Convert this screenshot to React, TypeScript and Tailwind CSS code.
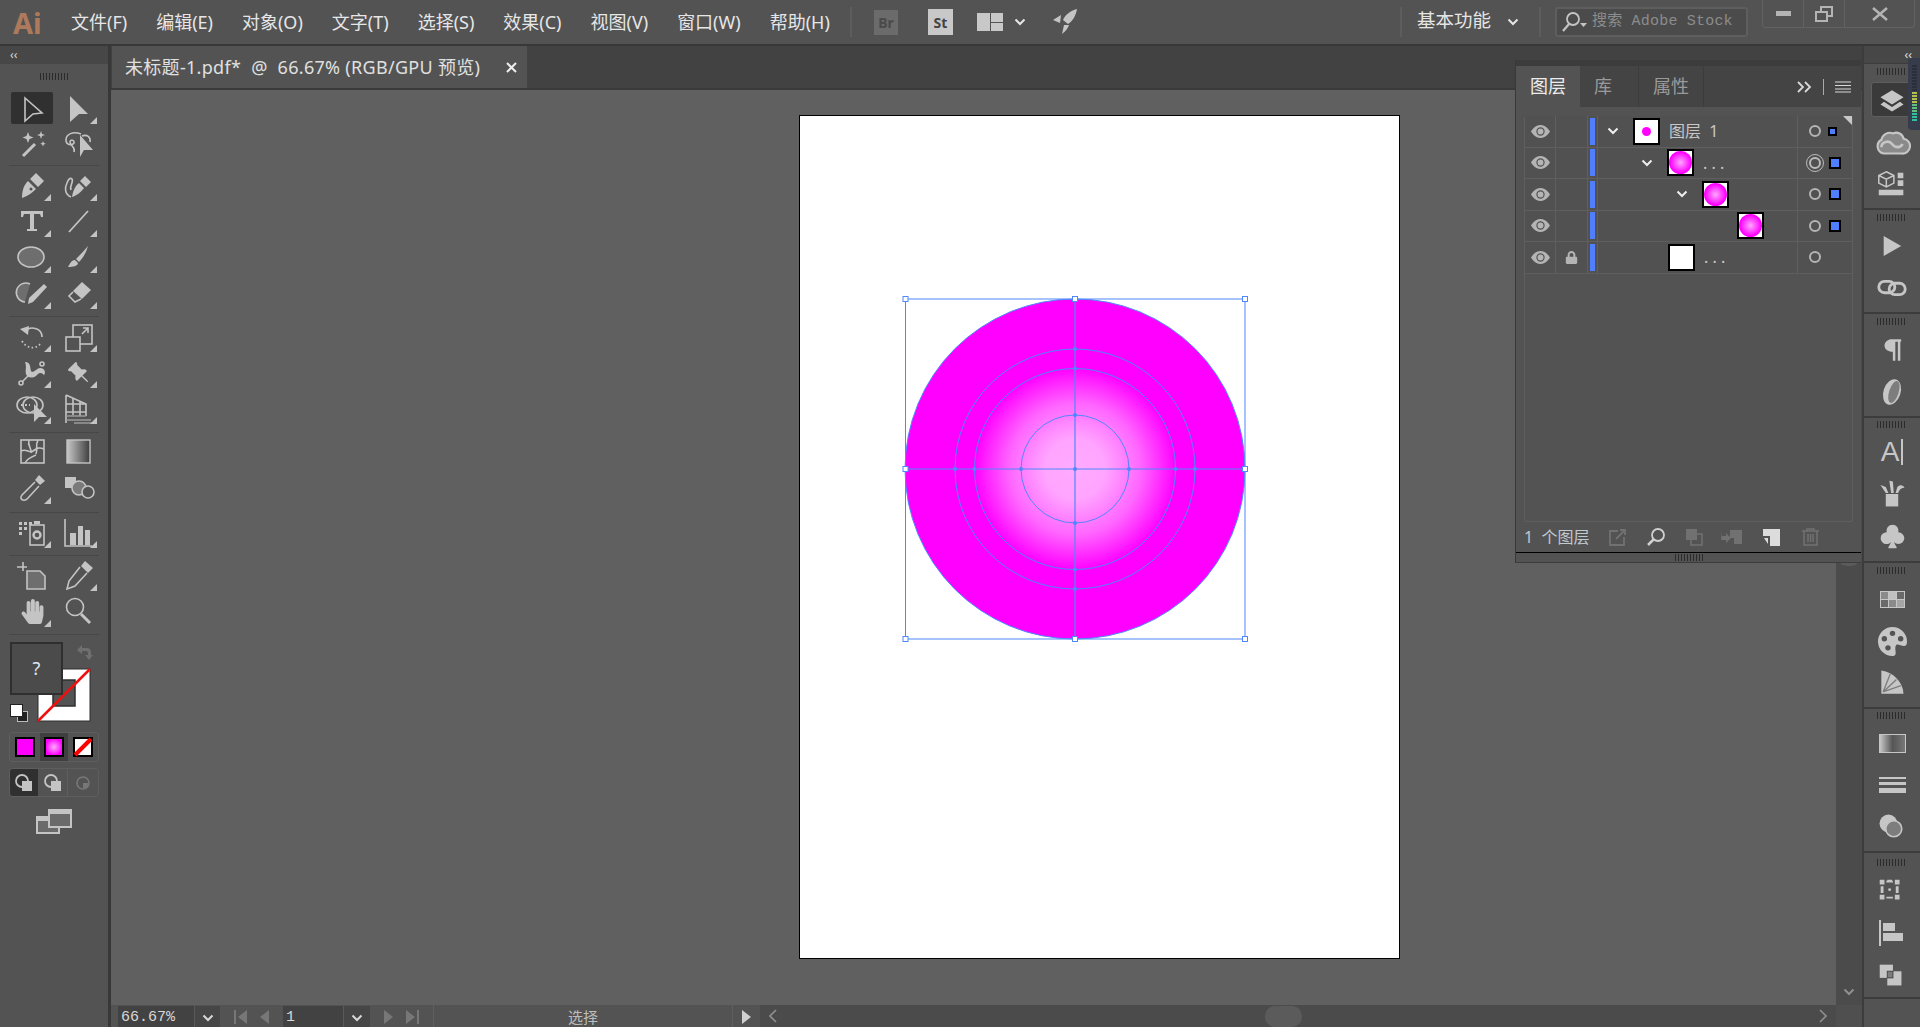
import type { ReactNode } from 'react'
import { BsEyeFill, BsPinAngleFill, BsSuitClubFill, BsPaletteFill } from 'react-icons/bs'
import { FaHandPaper, FaLock } from 'react-icons/fa'

const uiFont = "font-['Noto_Sans','Noto_Sans_CJK_SC',sans-serif]"
const menus = ['文件(F)', '编辑(E)', '对象(O)', '文字(T)', '选择(S)', '效果(C)', '视图(V)', '窗口(W)', '帮助(H)']

function Svg({ children, size = 36, box = 36 }: { children: ReactNode; size?: number; box?: number }) {
  return (
    <svg width={size} height={size} viewBox={`0 0 ${box} ${box}`} fill="currentColor" className="block">
      {children}
    </svg>
  )
}

function Chevron({ className = '' }: { className?: string }) {
  return (
    <svg width="12" height="8" viewBox="0 0 12 8" className={className}>
      <path d="M1.5 1.5 6 6l4.500-4.500" fill="none" stroke="currentColor" strokeWidth="2" />
    </svg>
  )
}

function Gripper({ className = '' }: { className?: string }) {
  return <div className={`h-[7px] w-[28px] bg-[repeating-linear-gradient(90deg,#2b2b2b_0_1px,transparent_1px_3px)] ${className}`} />
}

// one cell of the tool panel, tri = the little flyout corner
function Tool({ children, tri = true, active = false }: { children: ReactNode; tri?: boolean; active?: boolean }) {
  return (
    <div className="relative flex h-[36px] w-[46px] items-center justify-center text-[#c4c4c4]">
      {active && <div className="absolute left-[2px] top-[2px] h-[32px] w-[42px] rounded-[2px] bg-[#303030]" />}
      <div className="relative flex h-[36px] w-[36px] items-center justify-center">{children}</div>
      {tri && (
        <svg width="7" height="7" viewBox="0 0 7 7" className="absolute bottom-[2px] right-[4px]">
          <path d="M7 0v7H0z" fill="#c4c4c4" />
        </svg>
      )}
    </div>
  )
}

const line = { fill: 'none', stroke: 'currentColor', strokeWidth: 1.6 }

function ToolGroup({ h, children }: { h: string; children: ReactNode }) {
  return <div className={`mx-[9px] border-b border-[#474747] ${h}`}><div className="grid grid-cols-[46px_46px] pt-[1px]">{children}</div></div>
}

function ToolsPanel() {
  return (
    <div className="flex w-[111px] shrink-0 flex-col border-r-[3px] border-[#383838] bg-[#535353]">
      <div className="flex h-[18px] items-center bg-[#474747] pl-[10px] text-[12px] leading-none text-[#d8d8d8]">‹‹</div>
      <div className="flex h-[25px] items-center justify-center"><Gripper /></div>
      <ToolGroup h="h-[77px]">
        <Tool tri={false} active><Svg><path d="M11 8 28 23l-9 1-8 7z" {...line} /></Svg></Tool>
        <Tool><Svg><path d="M10 6 28 24h-9l-9 8z" /></Svg></Tool>
        <Tool tri={false}><Svg><path d="M9 30 21 18" stroke="currentColor" strokeWidth="3" /><path d="m14 6 1.500 4 4 1.500-4 1.500-1.500 4-1.500-4-4-1.500 4-1.500zM27 5l1 3 3 1-3 1-1 3-1-3-3-1 3-1zM29 15l.8 2 2 .8-2 .8-.8 2-.8-2-2-.8 2-.8z" /></Svg></Tool>
        <Tool tri={false}><Svg><path d="M21 8c-8-3-15 0-15 6 0 5 6 6 8 3 1-3-4-4-4-1 0 4 6 5 4 10" {...line} /><path d="M22 10c5-2 9 1 8 6" {...line} /><path d="M20 9v22l4-7h9z" /></Svg></Tool>
      </ToolGroup>
      <ToolGroup h="h-[151px]">
        <Tool><Svg><path d="M8 31c0-8 2-13 6-17l8 8c-4 4-8 7-14 9zM16 12l6-6 8 8-6 6z" /><circle cx="17" cy="22" r="1.500" fill="#535353" /></Svg></Tool>
        <Tool><Svg><path d="M12 30c1-6 3-11 7-14l5 5c-3 4-6 7-12 9zM20 14l5-5 6 6-5 5z" /><path d="M11 30C4 27 5 20 7 16c1-3 3-6 5-4 2 3-3 7-1 11" {...line} /></Svg></Tool>
        <Tool><Svg><path d="M7 8h22v6h-2l-1-3h-6v15h3v2H13v-2h3V11h-6l-1 3H7z" /></Svg></Tool>
        <Tool><Svg><path d="M9 29 28 8" stroke="currentColor" strokeWidth="1.800" /></Svg></Tool>
        <Tool><Svg><ellipse cx="17" cy="18" rx="13" ry="10" fill="#6e6e6e" stroke="currentColor" strokeWidth="1.600" /></Svg></Tool>
        <Tool><Svg><path d="M28 7c-4 5-8 9-12 13l3 3c4-4 7-9 9-16zM15 21c-4 0-5 4-7 7 5 0 10-1 10-4z" /></Svg></Tool>
        <Tool><Svg><path d="M16 9a9.500 9.500 0 1 0-5 18" fill="#6e6e6e" stroke="currentColor" strokeWidth="1.600" /><path d="m30 9 3 3-14 15-5 2 1-6z" /></Svg></Tool>
        <Tool><Svg><path d="m22 7 9 8-9 9-9-8z" /><path d="m13 17-4 4 6 6 6-3" {...line} /></Svg></Tool>
      </ToolGroup>
      <ToolGroup h="h-[116px]">
        <Tool><Svg><path d="M11 14c5-7 17-4 17 5" {...line} /><path d="m6 11 9-3-1 9z" /><path d="M8 23c5 8 14 9 19 2" fill="none" stroke="currentColor" strokeWidth="1.800" strokeDasharray="1.500 2.500" /></Svg></Tool>
        <Tool><Svg><rect x="13" y="7" width="19" height="19" {...line} /><rect x="6" y="19" width="14" height="14" fill="#535353" stroke="currentColor" strokeWidth="1.600" /><path d="m22 16 6-6M23 10h5v5" {...line} /></Svg></Tool>
        <Tool><Svg><path d="M11 8c6 0 5 6 6 9 2 3 6-3 9-3 5 0 6 5 4 7-2-2-4-3-7 0-4 4-10 3-11-1-1-4 1-7-1-12z" /><circle cx="7" cy="29" r="2" {...line} /><circle cx="28" cy="10" r="2" {...line} /><path d="m8 28 8-8" {...line} /></Svg></Tool>
        <Tool><BsPinAngleFill size={23} className="-scale-x-100" /></Tool>
        <Tool><Svg><ellipse cx="13" cy="15" rx="10" ry="8" {...line} /><ellipse cx="19" cy="15" rx="10" ry="8" {...line} /><path d="M7 15h9" fill="none" stroke="currentColor" strokeWidth="2" strokeDasharray="2 2" /><path d="M20 14v18l5-5h8z" /></Svg></Tool>
        <Tool><Svg><path d="M6 5v28M6 5l20 9v12M6 14h20M6 22h20M13 8v17M20 11v15" {...line} /><path d="M6 26h20M6 30h25M14 33h20" stroke="#9a9a9a" strokeWidth="1.400" /></Svg></Tool>
      </ToolGroup>
      <ToolGroup h="h-[80px]">
        <Tool tri={false}><Svg><rect x="7" y="6" width="23" height="23" {...line} /><path d="M7 17c6-3 8 3 12 0s6-4 11-2M15 6c-2 6 3 8 2 13M24 6c-3 5 0 9-2 14M11 29c2-4 6-6 11-8" {...line} /></Svg></Tool>
        <Tool tri={false}><Svg><defs><linearGradient id="gt" x1="0" x2="1"><stop offset="0" stopColor="#c8c8c8" /><stop offset="1" stopColor="#3c3c3c" /></linearGradient></defs><rect x="7" y="6" width="23" height="23" fill="url(#gt)" stroke="#c4c4c4" strokeWidth="1.400" /></Svg></Tool>
        <Tool><Svg><path d="M25 5l6 6-5 4-5-5z" /><path d="M21 12 8 25c-2 2-1 5 1 5 3 1 4-1 5-2l11-12" {...line} /></Svg></Tool>
        <Tool tri={false}><Svg><rect x="5" y="7" width="11" height="11" /><circle cx="19" cy="18" r="7" fill="#7a7a7a" stroke="currentColor" strokeWidth="1.600" /><circle cx="28" cy="22" r="6" fill="#535353" stroke="currentColor" strokeWidth="1.600" /></Svg></Tool>
      </ToolGroup>
      <ToolGroup h="h-[43px]">
        <Tool><Svg><path d="M5 8h3v3H5zM10 8h3v3h-3zM15 8h3v3h-3zM5 13h3v3H5zM10 13h3v3h-3zM5 18h3v3H5z" /><path d="M20 7h6v3h-6z" /><rect x="16" y="11" width="14" height="20" {...line} /><circle cx="23" cy="21" r="3.500" fill="none" stroke="currentColor" strokeWidth="2.400" /></Svg></Tool>
        <Tool><Svg><path d="M5 5v27h27" {...line} /><path d="M10 19h6v12h-6zM18 12h5v19h-5zM25 16h5v15h-5z" /></Svg></Tool>
      </ToolGroup>
      <ToolGroup h="h-[79px]">
        <Tool tri={false}><Svg><path d="M9 14V5M3 10h10" {...line} /><path d="M13 14h13l5 5v13H13z" fill="#6e6e6e" stroke="currentColor" strokeWidth="1.600" /></Svg></Tool>
        <Tool><Svg><path d="M25 4l8 7-5 5-7-7z" /><path d="M20 10 9 24l-2 8 8-3 12-13" {...line} /></Svg></Tool>
        <Tool><FaHandPaper size={25} /></Tool>
        <Tool tri={false}><Svg><circle cx="15" cy="14" r="8.500" {...line} /><path d="m21 21 9 9" stroke="currentColor" strokeWidth="3" /></Svg></Tool>
      </ToolGroup>
      <ColorArea />
    </div>
  )
}

function ColorArea() {
  return (
    <div className="flex flex-col">
      <div className="relative h-[97px]">
        <svg width="54" height="54" viewBox="0 0 54 54" className="absolute left-[37px] top-[33px]">
          <rect x="1" y="1" width="52" height="52" fill="#fff" stroke="#2f2f2f" />
          <rect x="16" y="12" width="22" height="26" fill="#535353" stroke="#2f2f2f" strokeWidth="1.500" />
          <path d="M1 53 53 1" stroke="#f00f0f" strokeWidth="2.500" />
        </svg>
        <div className="absolute left-[10px] top-[7px] flex h-[53px] w-[53px] items-center justify-center border-2 border-[#2f2f2f] bg-[#4b4b4b] text-[18px] text-[#dfe6ee]">?</div>
        <svg width="18" height="18" viewBox="0 0 18 18" className="absolute left-[76px] top-[9px] text-[#6f6f6f]">
          <path d="M1 6 6 1v3h5q4 0 4 5v2h2l-4 5-4-5h3V9q0-2-2-2H6v3z" fill="currentColor" />
        </svg>
        <div className="absolute left-[17px] top-[76px] h-[11px] w-[11px] border border-[#bbb] bg-[#222]" />
        <div className="absolute left-[11px] top-[70px] h-[11px] w-[11px] bg-white outline outline-[#222]" />
      </div>
      <div className="mx-[9px] flex h-[30px] rounded-[3px] border border-[#5e5e5e]">
        <div className="flex w-[30px] items-center justify-center"><div className="h-[20px] w-[20px] border-2 border-black bg-[#ff00ff]" /></div>
        <div className="flex w-[29px] items-center justify-center bg-[#3f3f3f]"><div className="h-[20px] w-[20px] border-2 border-black bg-[radial-gradient(circle,#ffaaff_0%,#ff00ff_75%)]" /></div>
        <div className="flex w-[30px] items-center justify-center">
          <svg width="20" height="20" viewBox="0 0 20 20"><rect x="1" y="1" width="18" height="18" fill="#fff" stroke="#000" strokeWidth="2" /><path d="M2 18 18 2" stroke="#f00" strokeWidth="4" /></svg>
        </div>
      </div>
      <div className="mx-[9px] mt-[6px] flex h-[29px] rounded-[4px] border border-[#5e5e5e] text-[#c4c4c4]">
        <div className="flex w-[28px] items-center justify-center rounded-l-[3px] bg-[#303030]"><ModeIcon /></div>
        <div className="flex w-[30px] items-center justify-center border-r border-[#5e5e5e]"><ModeIcon /></div>
        <div className="flex w-[30px] items-center justify-center text-[#777]">
          <svg width="16" height="16" viewBox="0 0 16 16"><circle cx="8" cy="8" r="6" fill="none" stroke="currentColor" strokeWidth="1.600" /><path d="M8 8h5v5H8z" fill="currentColor" /></svg>
        </div>
      </div>
      <div className="mt-[11px] flex justify-center text-[#c4c4c4]">
        <svg width="36" height="26" viewBox="0 0 36 26">
          <rect x="1" y="9" width="22" height="16" fill="#6a6a6a" stroke="currentColor" strokeWidth="2" />
          <rect x="13" y="2" width="22" height="17" fill="#6a6a6a" stroke="currentColor" strokeWidth="2" />
          <path d="M13 2h22v4H13zM1 9h12v4H1z" fill="currentColor" />
        </svg>
      </div>
    </div>
  )
}

function ModeIcon() {
  return (
    <svg width="20" height="20" viewBox="0 0 20 20">
      <circle cx="8" cy="8" r="6" fill="none" stroke="currentColor" strokeWidth="1.800" />
      <rect x="8" y="8" width="10" height="10" fill="currentColor" />
    </svg>
  )
}

function TopBar() {
  return (
    <div className={`flex h-[46px] shrink-0 items-center border-b-[2px] border-[#383838] bg-[#535353] ${uiFont}`}>
      <div className="w-[71px] pl-[13px] text-[29px] font-bold leading-none text-[#ad7a5c]">Ai</div>
      <div className="flex w-[775px] gap-[29px] text-[18px] text-[#e6e6e6]">
        {menus.map((m) => <span key={m}>{m}</span>)}
      </div>
      <div className="ml-[4px] h-[30px] w-[2px] bg-[#5d5d5d]" />
      <div className="ml-[22px] flex h-[25px] w-[24px] items-center justify-center bg-[#6b6b6b] text-[14px] font-bold text-[#4a4a4a]">Br</div>
      <div className="ml-[30px] flex h-[26px] w-[25px] items-center justify-center bg-[#c8c8c8] text-[14px] font-bold text-[#444]">St</div>
      <div className="ml-[24px] grid h-[18px] w-[26px] grid-cols-2 grid-rows-2 gap-[1px]">
        <div className="row-span-2 bg-[#c8c8c8]" />
        <div className="bg-[#c8c8c8]" />
        <div className="bg-[#c8c8c8]" />
      </div>
      <Chevron className="ml-[11px] text-[#e6e6e6]" />
      <svg width="28" height="28" viewBox="0 0 28 28" className="ml-[25px] text-[#c4c4c4]">
        <path d="M26 1c-7 2-12 6-14 11l5 4c5-3 8-9 9-15zM10 7l-8 5 7 3zM13 17l-2 9c4-3 6-6 7-9z" fill="currentColor" />
      </svg>
      <div className="ml-auto mr-[15px] h-[30px] w-[2px] bg-[#5d5d5d]" />
      <span className="-mt-[5px] text-[18.500px] text-[#e6e6e6]">基本功能</span>
      <Chevron className="ml-[16px] text-[#e6e6e6]" />
      <div className="ml-[20px] h-[30px] w-[2px] bg-[#5d5d5d]" />
      <div className="ml-[14px] flex h-[30px] w-[193px] items-center rounded-[3px] border-2 border-[#5e5e5e] bg-[#4b4b4b] pl-[5px] text-[15px] text-[#8c8c8c]">
        <svg width="26" height="22" viewBox="0 0 26 22" className="text-[#c4c4c4]">
          <circle cx="11" cy="8" r="6" fill="none" stroke="currentColor" strokeWidth="1.800" />
          <path d="M7 13 1 20" stroke="currentColor" strokeWidth="2.200" /><path d="M18 12h7l-3.500 4z" fill="currentColor" />
        </svg>
        <span className="ml-[4px] tracking-[0.2px] font-['Liberation_Mono','Noto_Sans_CJK_SC',monospace]">搜索 Adobe Stock</span>
      </div>
      <div className="ml-[14px] mr-[5px] flex h-[28px] w-[153px] self-start rounded-b-[4px] border border-t-0 border-[#626262] text-[#b4b4b4]">
        <div className="flex w-[41px] items-center justify-center border-r border-[#626262]"><div className="h-[5px] w-[15px] bg-current" /></div>
        <div className="flex w-[41px] items-center justify-center border-r border-[#626262]">
          <svg width="18" height="16" viewBox="0 0 18 16"><path d="M6 5V1h11v9h-5M1 6h11v9H1z" fill="none" stroke="currentColor" strokeWidth="2" /></svg>
        </div>
        <div className="flex flex-1 items-center justify-center">
          <svg width="16" height="14" viewBox="0 0 16 14"><path d="m1 1 14 12M15 1 1 13" stroke="currentColor" strokeWidth="2.500" /></svg>
        </div>
      </div>
    </div>
  )
}

function Artwork() {
  const cx = 275
  const cy = 353
  const stroke = '#4f87ff'
  const handles = [[105.5, 183], [275, 183], [445, 183], [105.5, 353], [445, 353], [105.5, 523], [275, 523], [445, 523]]
  const rs = [120, 100.5, 54]
  return (
    <svg width="599" height="842" viewBox="0 0 599 842" className="block">
      <defs>
        <radialGradient id="rg" gradientUnits="userSpaceOnUse" cx={cx} cy={cy} r="101">
          <stop offset="0" stopColor="#ffaaff" />
          <stop offset="0.3" stopColor="#ffa4ff" />
          <stop offset="0.65" stopColor="#ff66ff" />
          <stop offset="1" stopColor="#ff00ff" />
        </radialGradient>
      </defs>
      <circle cx={cx} cy={cy} r="170" fill="#ff00ff" stroke={stroke} strokeWidth="1" />
      <circle cx={cx} cy={cy} r="100.500" fill="url(#rg)" />
      {rs.map((r) => (
        <g key={r}>
          <circle cx={cx} cy={cy} r={r} fill="none" stroke={stroke} />
          {[[r, 0], [-r, 0], [0, r], [0, -r]].map(([x, y]) => (
            <circle key={`${x}${y}`} cx={cx + x} cy={cy + y} r="2" fill={stroke} />
          ))}
        </g>
      ))}
      <path d={`M${cx} 183V523M105.500 ${cy}H445`} stroke={stroke} strokeWidth="1.200" />
      <circle cx={cx} cy={cy} r="2" fill={stroke} />
      <rect x="105.500" y="183" width="339.500" height="340" fill="none" stroke={stroke} />
      {handles.map(([x, y]) => (
        <rect key={`${x}-${y}`} x={x - 2.5} y={y - 2.5} width="5" height="5" fill="#fff" stroke={stroke} />
      ))}
    </svg>
  )
}

function StatusBar() {
  const tri = 'text-[#777]'
  return (
    <div className={`flex h-[22px] shrink-0 items-stretch bg-[#535353] pl-[7px] text-[#d8d8d8] ${uiFont}`}>
      <div className="mt-[1px] flex w-[76px] items-center bg-[#424242] pl-[3px] pt-[4px] font-['Liberation_Mono',monospace] text-[15px]">66.67%</div>
      <div className="mt-[1px] flex w-[26px] items-center justify-center border-l border-[#5a5a5a] bg-[#464646] pt-[3px]"><Chevron /></div>
      <div className={`flex w-[63px] items-center justify-center gap-[13px] pt-[2px] ${tri}`}>
        <svg width="13" height="14" viewBox="0 0 13 14"><path d="M0 0h2v14H0zM13 0v14L4 7z" fill="currentColor" /></svg>
        <svg width="9" height="14" viewBox="0 0 9 14"><path d="M9 0v14L0 7z" fill="currentColor" /></svg>
      </div>
      <div className="mt-[1px] flex w-[60px] items-center bg-[#424242] pl-[3px] pt-[4px] font-['Liberation_Mono',monospace] text-[15px]">1</div>
      <div className="mt-[1px] flex w-[27px] items-center justify-center border-l border-[#5a5a5a] bg-[#464646] pt-[3px]"><Chevron /></div>
      <div className={`flex w-[64px] items-center justify-center gap-[13px] border-r border-[#5f5f5f] pt-[2px] ${tri}`}>
        <svg width="9" height="14" viewBox="0 0 9 14"><path d="M0 0v14l9-7z" fill="currentColor" /></svg>
        <svg width="13" height="14" viewBox="0 0 13 14"><path d="M13 0h-2v14h2zM0 0v14l9-7z" fill="currentColor" /></svg>
      </div>
      <div className="flex w-[299px] items-center justify-center border-r border-[#5f5f5f] pt-[3px] text-[15px] text-[#bdbdbd]">选择</div>
      <div className="flex w-[27px] items-center justify-center pt-[2px] text-[#d0d0d0]">
        <svg width="9" height="14" viewBox="0 0 9 14"><path d="M0 0v14l9-7z" fill="currentColor" /></svg>
      </div>
      <div className="flex flex-1 items-center bg-[#4b4b4b] pl-[9px] text-[#8f8f8f]">
        <svg width="8" height="14" viewBox="0 0 8 14"><path d="M7 1 1 7l6 6" fill="none" stroke="currentColor" strokeWidth="1.600" /></svg>
        <div className="ml-[488px] mt-[1px] h-[21px] w-[37px] rounded-[10px] bg-[#5b5b5b]" />
        <svg width="8" height="14" viewBox="0 0 8 14" className="ml-auto mr-[9px]"><path d="m1 1 6 6-6 6" fill="none" stroke="currentColor" strokeWidth="1.600" /></svg>
      </div>
      <div className="w-[26px] bg-[#4f4f4f]" />
    </div>
  )
}

function Main() {
  return (
    <div className="flex min-w-0 flex-1 flex-col">
      <div className={`flex h-[44px] shrink-0 border-b-2 border-[#3a3a3a] bg-[#424242] pl-[1px] ${uiFont}`}>
        <div className="flex w-[415px] items-center justify-between bg-[#535353] pl-[13px] pr-[10px] text-[18px] tracking-[0.3px] text-[#e0e0e0]">
          <span className="whitespace-pre">未标题-1.pdf*  @  66.67% (RGB/GPU 预览)</span>
          <svg width="11" height="11" viewBox="0 0 11 11"><path d="m1 1 9 9M10 1l-9 9" stroke="#eee" strokeWidth="2" /></svg>
        </div>
      </div>
      <div className="flex min-h-0 flex-1 bg-[#606060]">
        <div className="flex-1 pl-[688px] pt-[25px]">
          <div className="h-[844px] w-[601px] border border-black bg-white">
            <Artwork />
          </div>
        </div>
        <div className="flex w-[26px] flex-col justify-between bg-[#4b4b4b] pb-[9px] text-[#8f8f8f]">
          <div className="mx-[1px] h-[476px] rounded-b-[10px] bg-[#5b5b5b]" />
          <Chevron className="mx-auto" />
        </div>
      </div>
      <StatusBar />
    </div>
  )
}

function DockGroup({ h, grip = 'h-[15px]', children }: { h: string; grip?: string; children: ReactNode }) {
  return (
    <div className={`flex flex-col border-b-2 border-[#3c3c3c] ${h}`}>
      <div className={`flex items-center justify-center pr-[2px] ${grip}`}><Gripper /></div>
      {children}
    </div>
  )
}

function DockItem({ children, active = false }: { children: ReactNode; active?: boolean }) {
  return (
    <div className="relative flex h-[42px] items-center justify-center text-[#c6c6c6]">
      {active && <div className="absolute left-[7px] top-[3px] h-[35px] w-[50px] rounded-[3px] border border-[#5e5e5e] bg-[#3a3a3a]" />}
      <div className="relative">{children}</div>
    </div>
  )
}

function Dock() {
  return (
    <div className="flex w-[58px] shrink-0 flex-col border-l-2 border-[#3c3c3c] bg-[#535353]">
      <div className="flex h-[18px] items-center justify-end border-b border-[#3c3c3c] bg-[#474747] pr-[8px] text-[12px] leading-none text-[#e0e0e0]">‹‹</div>
      <DockGroup h="h-[146px]">
        <DockItem active><Svg size={32}><path d="m18 7 13 8-13 8-13-8z" /><path d="m9 20-4 3 13 8 13-8-4-3-9 6z" /></Svg></DockItem>
        <DockItem><div className="pt-[3px]"><Svg size={38}><path d="M10 27a7 7 0 0 1-2-13 8 8 0 0 1 11-6 7 7 0 0 1 10 5 7 7 0 0 1-2 14z" fill="#8a8a8a" stroke="currentColor" strokeWidth="2" /><path d="M8 21c0-5 7-7 10-3s8 4 10 0" fill="none" stroke="currentColor" strokeWidth="2.500" /></Svg></div></DockItem>
        <DockItem><Svg size={34}><path d="m12 5 8 4v8l-8 4-8-4V9zM4 9l8 4 8-4M12 13v8" fill="none" stroke="currentColor" strokeWidth="1.600" /><path d="M24 6h6v6h-6zM24 14h6v6h-6zM4 24h26v6H4z" /></Svg></DockItem>
      </DockGroup>
      <DockGroup h="h-[104px]">
        <DockItem><Svg size={30}><path d="M8 6v24l21-12z" /></Svg></DockItem>
        <DockItem><Svg size={34}><rect x="4" y="11" width="17" height="12" rx="6" fill="none" stroke="currentColor" strokeWidth="3" /><rect x="15" y="13" width="17" height="12" rx="6" fill="none" stroke="currentColor" strokeWidth="3" /></Svg></DockItem>
      </DockGroup>
      <DockGroup h="h-[104px]">
        <DockItem><Svg size={30}><path d="M17 5h12v3h-1v23h-3V8h-3v23h-3V20c-6 0-10-3-10-7.500S14 5 17 5z" /></Svg></DockItem>
        <DockItem><Svg size={34}><ellipse cx="18" cy="18" rx="9" ry="14" transform="rotate(18 18 18)" /><ellipse cx="20" cy="18" rx="5" ry="12" transform="rotate(18 20 18)" fill="#7d7d7d" /></Svg></DockItem>
      </DockGroup>
      <DockGroup h="h-[145px]" grip="h-[13px]">
        <DockItem><div className="flex items-center"><span className="font-['Liberation_Sans',sans-serif] text-[28px] leading-none">A</span><div className="ml-[2px] h-[26px] w-[2px] bg-current" /></div></DockItem>
        <DockItem><Svg size={32}><path d="M11 18h14v14H11z" /><path d="M17 17 15 3l4 1 1 13zM11 17 5 8l6 2 3 7zM22 17l2-7c3-3 7-2 8 1-3 0-6 2-7 6z" /></Svg></DockItem>
        <DockItem><BsSuitClubFill size={27} /></DockItem>
      </DockGroup>
      <DockGroup h="h-[146px]">
        <DockItem>
          <div className="grid h-[17px] w-[25px] grid-cols-3 gap-[1px] border border-[#c6c6c6] bg-[#c6c6c6]">
            <div className="bg-[#8a8a8a]" /><div className="bg-[#c0c0c0]" /><div className="bg-[#6a6a6a]" />
            <div className="bg-[#6a6a6a]" /><div className="bg-[#8a8a8a]" /><div className="bg-[#a5a5a5]" />
          </div>
        </DockItem>
        <DockItem><BsPaletteFill size={29} /></DockItem>
        <DockItem><Svg size={32}><path d="M6 4v26h25C30 17 20 6 6 4z" /><path d="m8 28 8-20M8 28l15-14M8 28l20-7" stroke="#7d7d7d" strokeWidth="1.500" /></Svg></DockItem>
      </DockGroup>
      <DockGroup h="h-[144px]" grip="h-[13px]">
        <DockItem><div className="h-[19px] w-[27px] border border-[#c6c6c6] bg-[linear-gradient(90deg,#c6c6c6,#555_50%,#777)]" /></DockItem>
        <DockItem>
          <div className="flex w-[27px] flex-col gap-[3px]">
            <div className="h-[2px] bg-current" /><div className="h-[3px] bg-current" /><div className="h-[5px] bg-current" />
          </div>
        </DockItem>
        <DockItem><Svg size={32}><circle cx="14" cy="14" r="10" /><circle cx="20" cy="20" r="9" fill="#7d7d7d" stroke="currentColor" strokeWidth="1.800" /></Svg></DockItem>
      </DockGroup>
      <DockGroup h="h-[146px]" grip="h-[18px]">
        <DockItem><Svg size={34}><path d="M5 5h5v5H5zM13 5h5v3h-5zM21 5h5v5h-5zM5 21h5v5H5zM21 21h5v5h-5zM6 12h3v7H6zM22 12h3v7h-3zM12 6h7v2h-7zM12 23h7v2h-7z" /><circle cx="15.500" cy="15.500" r="1.500" /></Svg></DockItem>
        <DockItem><Svg size={36}><path d="M5 4h2v26H5z" /><path d="M9 7h12v8H9zM9 17h20v8H9z" /></Svg></DockItem>
        <DockItem><Svg size={34}><path d="M5 6h14v14H5z" /><path d="M13 13h15v15H13z" /><rect x="13" y="13" width="6" height="7" fill="#7d7d7d" stroke="#444" /></Svg></DockItem>
      </DockGroup>
    </div>
  )
}

const rows = [
  { pl: 'pl-[5px]', chevron: true, thumb: 'dot', label: '图层  1', target: 'small' },
  { pl: 'pl-[39px]', chevron: true, thumb: 'grad', label: '. . .', target: 'double' },
  { pl: 'pl-[74px]', chevron: true, thumb: 'grad', label: '', target: 'big' },
  { pl: 'pl-[139px]', chevron: false, thumb: 'grad', label: '', target: 'big' },
  { pl: 'pl-[70px]', chevron: false, thumb: 'white', label: '. . .', target: 'none', locked: true },
]

function LayerRow({ row }: { row: (typeof rows)[number] }) {
  return (
    <div className="flex h-[31.500px] border-b border-[#5f5f5f] bg-[#515151]">
      <div className="flex w-[31px] items-center justify-center border-r border-[#5f5f5f] text-[#b4b4b4]"><BsEyeFill size={19} /></div>
      <div className="flex w-[32px] items-center justify-center border-r border-[#5f5f5f] text-[#b4b4b4]">{row.locked && <FaLock size={13} />}</div>
      <div className="flex w-[10px] items-center justify-center border-r border-[#5f5f5f] pr-[1px]"><div className="h-[27px] w-[5px] bg-[#4f7fff]" /></div>
      <div className={`flex flex-1 items-center border-r border-[#5f5f5f] text-[16px] text-[#c8c8c8] ${row.pl}`}>
        {row.chevron && <div className="w-[30px] pl-[4px] text-[#eee]"><Chevron /></div>}
        <div className="flex h-[27px] w-[27px] items-center justify-center border-2 border-black bg-white">
          {row.thumb === 'dot' && <div className="h-[9px] w-[9px] rounded-full bg-[#ff00ff]" />}
          {row.thumb === 'grad' && <div className="h-[23px] w-[23px] rounded-full bg-[radial-gradient(circle,#ffa8ff_0%,#ff00ff_65%)]" />}
        </div>
        {row.label && <span className="ml-[9px] whitespace-pre">{row.label}</span>}
      </div>
      <div className="flex w-[54px] items-center pl-[11px]">
        {row.target === 'double' ? (
          <div className="-ml-[3px] flex h-[18px] w-[18px] items-center justify-center rounded-full border border-[#bbb]"><div className="h-[12px] w-[12px] rounded-full border-2 border-[#bbb]" /></div>
        ) : (
          <div className="h-[12px] w-[12px] rounded-full border-2 border-[#b4b4b4]" />
        )}
        {row.target === 'small' && <div className="ml-[7px] h-[9px] w-[9px] border-2 border-black bg-[#4f7fff]" />}
        {(row.target === 'big') && <div className="ml-[8px] h-[12px] w-[12px] border-2 border-black bg-[#4f7fff]" />}
        {row.target === 'double' && <div className="ml-[5px] h-[12px] w-[12px] border-2 border-black bg-[#4f7fff]" />}
      </div>
    </div>
  )
}

// floats over the canvas, same as the real panel
function LayersPanel() {
  return (
    <div className={`absolute left-[1515px] top-[60px] flex h-[503px] w-[346px] flex-col border-l border-[#383838] bg-[#535353] ${uiFont}`}>
      <div className="h-[6px] bg-[#3c3c3c]" />
      <div className="flex h-[41px] items-stretch bg-[#444444] text-[18px] text-[#9a9a9a]">
        <div className="flex w-[64px] items-center justify-center bg-[#535353] text-[#ececec]">图层</div>
        <div className="flex w-[59px] items-center justify-center border-r border-[#3c3c3c] pr-[12px]">库</div>
        <div className="flex w-[65px] items-center justify-center border-r border-[#3c3c3c]">属性</div>
        <div className="ml-auto flex items-center gap-[11px] pr-[10px] text-[#d8d8d8]">
          <svg width="15" height="12" viewBox="0 0 15 12"><path d="m1 1 5 5-5 5M8 1l5 5-5 5" fill="none" stroke="currentColor" strokeWidth="1.800" /></svg>
          <div className="h-[16px] w-[1px] bg-[#aaa]" />
          <svg width="16" height="12" viewBox="0 0 16 12"><path d="M0 1h16M0 4.500h16M0 8h16M0 11h16" stroke="currentColor" strokeWidth="1.200" /></svg>
        </div>
      </div>
      <div className="relative mx-[8px] mt-[9px] h-[406px] rounded-[3px] border border-t-0 border-[#5f5f5f]">
        {rows.map((r, i) => <LayerRow key={i} row={r} />)}
        <svg width="9" height="9" viewBox="0 0 9 9" className="absolute right-0 top-0"><path d="M0 0h9v9z" fill="#c8c8c8" /></svg>
      </div>
      <div className="flex h-[30px] items-center pl-[8px] text-[#c0c8d0]">
        <span className="w-[85px] text-[16px] whitespace-pre">1  个图层</span>
        <svg width="18" height="18" viewBox="0 0 18 18" className="text-[#717171]"><path d="M9 3H1v14h14V9M7 11 16 2M11 2h5v5" fill="none" stroke="currentColor" strokeWidth="1.800" /></svg>
        <svg width="20" height="20" viewBox="0 0 20 20" className="ml-[19px] text-[#d0d0d0]"><circle cx="12" cy="8" r="6" fill="none" stroke="currentColor" strokeWidth="1.800" /><path d="m8 12-6 6" stroke="currentColor" strokeWidth="2.500" /></svg>
        <svg width="18" height="18" viewBox="0 0 18 18" className="ml-[19px] text-[#717171]"><path d="M1 1h11v11H1z" fill="currentColor" /><path d="M6 6h11v11H6z" fill="none" stroke="currentColor" strokeWidth="1.500" /></svg>
        <svg width="22" height="16" viewBox="0 0 22 16" className="ml-[18px] text-[#717171]"><path d="M9 1h12v14H13V9H9zM1 2v5h4V4l5 5-5 5v-3H0" fill="currentColor" /></svg>
        <svg width="17" height="17" viewBox="0 0 17 17" className="ml-[20px] text-[#dcdcdc]"><path d="M0 0h17v17H7V7H0zM1 9h4v6z" fill="currentColor" /></svg>
        <svg width="17" height="18" viewBox="0 0 17 18" className="ml-[22px] text-[#717171]"><path d="M0 3h17M5 3V1h7v2M2 3v14h13V3M6 6v8M8.500 6v8M11 6v8" fill="none" stroke="currentColor" strokeWidth="1.500" /></svg>
      </div>
      <div className="flex h-[11px] items-center justify-center border-y border-t-black border-b-[#3c3c3c]"><Gripper /></div>
    </div>
  )
}

// the little audio/CPU meter window that sits on top of the dock
function Meter() {
  const bars = ['dim', 'dim', 'dim', 'dim', 'dim', 'dim', 'dim', 'dim', 'dim', 'y', 'y', 'y', 'y', 'g', 'g', 'g', 't', 't', 't']
  return (
    <div className="absolute right-0 top-[58px] flex h-[72px] w-[12px] flex-col gap-[1px] rounded-l-[4px] bg-[#363c4c] py-[7px] pl-[4px] pr-[3px]">
      {bars.map((b, i) => (
        <div key={i} className={`h-[2px] ${b === 'dim' ? 'bg-[#2a2f3b]' : b === 'y' ? 'bg-[#b4c04c]' : b === 'g' ? 'bg-[#5fc080]' : 'bg-[#2fc0a0]'}`} />
      ))}
    </div>
  )
}

export default function App() {
  return (
    <div className="relative flex h-[1027px] w-[1920px] flex-col overflow-hidden bg-[#535353]">
      <TopBar />
      <div className="flex min-h-0 flex-1">
        <ToolsPanel />
        <Main />
        <Dock />
      </div>
      <LayersPanel />
      <Meter />
    </div>
  )
}
